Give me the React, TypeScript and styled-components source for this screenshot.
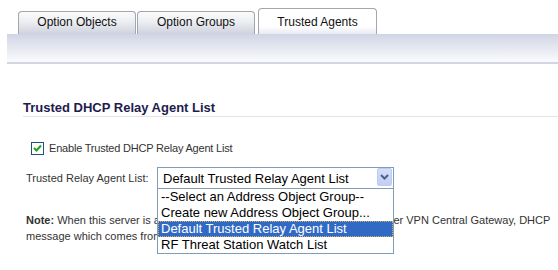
import React from 'react';
import styled, { createGlobalStyle } from 'styled-components';

const GlobalStyle = createGlobalStyle`
  html, body {
    margin: 0;
    padding: 0;
    background: #ffffff;
    font-family: "Liberation Sans", Arial, sans-serif;
  }
`;

const Page = styled.div`
  width: 558px;
  height: 270px;
  overflow: hidden;
  background: #fff;
`;

const TabBar = styled.div`
  display: flex;
  align-items: flex-end;
  padding: 8px 0 0 18px;
  height: 26px;
`;

const Tab = styled.div<{ active?: boolean }>`
  box-sizing: border-box;
  width: ${p => (p.active ? 119 : 118)}px;
  height: ${p => (p.active ? 26 : 23)}px;
  margin-left: ${p => (p.active ? 3 : 1)}px;
  &:first-child {
    margin-left: 0;
  }
  border: 1px solid #a3a6ad;
  border-bottom: none;
  border-radius: 4px 4px 0 0;
  background: ${p =>
    p.active
      ? 'linear-gradient(to bottom, #ffffff 0%, #ffffff 70%, #e8eaf4 100%)'
      : 'linear-gradient(to bottom, #fbfbfc 0%, #eceef2 45%, #cfd1de 100%)'};
  font-size: 12px;
  color: #111;
  text-align: center;
  padding-top: ${p => (p.active ? 6 : 3)}px;
`;

const Band = styled.div`
  margin-left: 7px;
  height: 28px;
  background: linear-gradient(to bottom, #d0d4e4 0%, #e4e6f0 45%, #fbfbfd 100%);
  border-bottom: 2px solid #d3d5e3;
`;

const Section = styled.div`
  padding: 36px 0 0 23px;
`;

const Heading = styled.div`
  font-size: 13px;
  font-weight: bold;
  color: #1e1b4d;
  line-height: 15px;
  border-bottom: 1px solid #e3e3e6;
  padding-bottom: 1px;
`;

const CheckRow = styled.label`
  display: flex;
  align-items: center;
  gap: 5px;
  margin: 24px 0 0 8px;
  font-size: 11px;
  letter-spacing: -0.2px;
  color: #333;
  height: 14px;
`;

const Box = styled.span`
  box-sizing: border-box;
  width: 13px;
  height: 13px;
  border: 1px solid #1c5180;
  background: #fff;
  display: flex;
  align-items: center;
  justify-content: center;
`;

const FieldRow = styled.div`
  display: flex;
  align-items: center;
  margin: 12px 0 0 3px;
  font-size: 11px;
  color: #333;
`;

const FieldLabel = styled.span`
  width: 131px;
`;

const SelectWrap = styled.div`
  position: relative;
  width: 237px;
`;

const SelectBox = styled.div`
  box-sizing: border-box;
  height: 22px;
  border: 1px solid #7f9db9;
  display: flex;
  align-items: center;
  padding-left: 5px;
  font-size: 13px;
  color: #000;
  background: #fff;
`;

const ArrowButton = styled.span`
  position: absolute;
  right: 2px;
  top: 1px;
  width: 15px;
  height: 18px;
  box-sizing: border-box;
  border: 1px solid #bccbf1;
  border-radius: 2px;
  background: linear-gradient(to bottom, #d4ddf9 0%, #c1cef6 100%);
  display: flex;
  align-items: center;
  justify-content: center;
`;

const OptionList = styled.div`
  position: absolute;
  top: 100%;
  left: 0;
  width: 237px;
  box-sizing: border-box;
  border: 1px solid #7f9db9;
  border-top: none;
  background: #fff;
  z-index: 2;
`;

const Option = styled.div<{ selected?: boolean }>`
  box-sizing: border-box;
  height: 16px;
  line-height: 14px;
  padding-left: 2px;
  font-size: 13px;
  white-space: nowrap;
  color: ${p => (p.selected ? '#fff' : '#000')};
  background: ${p => (p.selected ? '#316ac5' : '#fff')};
  border: 1px dotted ${p => (p.selected ? '#d4b25c' : 'transparent')};
`;

const Note = styled.p`
  margin: 23px 0 0 3px;
  font-size: 11px;
  line-height: 16px;
  color: #333;
`;

const options = [
  '--Select an Address Object Group--',
  'Create new Address Object Group...',
  'Default Trusted Relay Agent List',
  'RF Threat Station Watch List',
];

export default function App() {
  return (
    <Page>
      <GlobalStyle />
      <TabBar>
        <Tab>Option Objects</Tab>
        <Tab>Option Groups</Tab>
        <Tab active>Trusted Agents</Tab>
      </TabBar>
      <Band />
      <Section>
        <Heading>Trusted DHCP Relay Agent List</Heading>
        <CheckRow>
          <Box>
            <svg width="9" height="8" viewBox="0 0 9 8">
              <path d="M1 4 L3.5 6.5 L8 1.5" fill="none" stroke="#21a121" strokeWidth="2" />
            </svg>
          </Box>
          Enable Trusted DHCP Relay Agent List
        </CheckRow>
        <FieldRow>
          <FieldLabel>Trusted Relay Agent List:</FieldLabel>
          <SelectWrap>
            <SelectBox>Default Trusted Relay Agent List</SelectBox>
            <ArrowButton>
              <svg width="9" height="6" viewBox="0 0 9 6">
                <path d="M1 1 L4.5 4.5 L8 1" fill="none" stroke="#4d6185" strokeWidth="2" />
              </svg>
            </ArrowButton>
            <OptionList>
              {options.map((o, i) => (
                <Option key={o} selected={i === 2}>
                  {o}
                </Option>
              ))}
            </OptionList>
          </SelectWrap>
        </FieldRow>
        <Note>
          <b>Note:</b> When this server is acting as a relay agent for Global VPN Client under VPN Central Gateway, DHCP
          <br />
          message which comes from a trusted relay agent is accepted.
        </Note>
      </Section>
    </Page>
  );
}
